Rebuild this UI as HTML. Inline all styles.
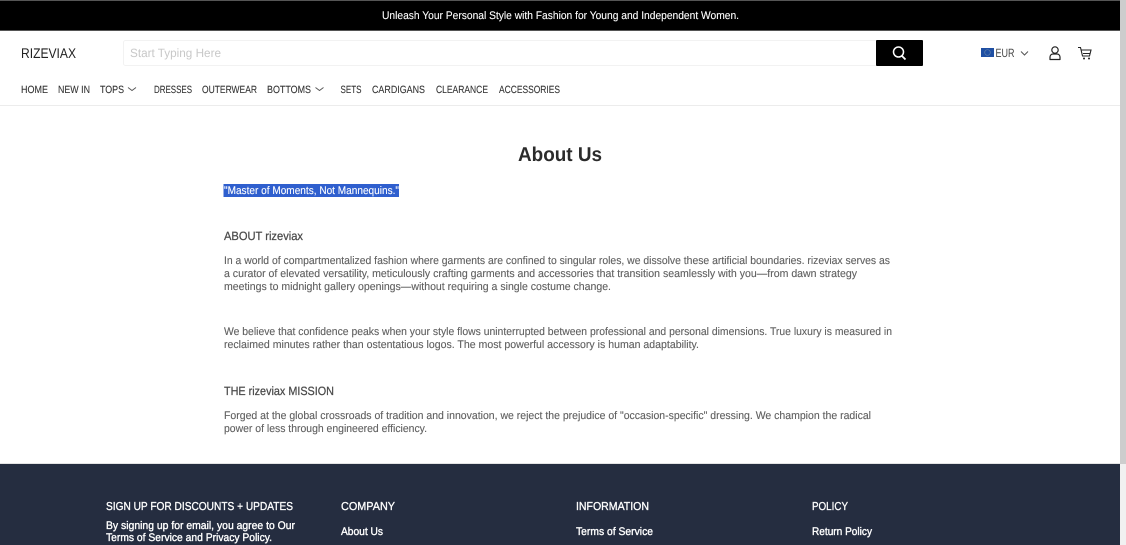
<!DOCTYPE html>
<html><head><meta charset="utf-8"><title>About Us</title>
<style>
html,body{margin:0;padding:0;width:1126px;height:545px;overflow:hidden;background:#fff}
svg{display:block;position:absolute;left:0;top:0}
text{font-family:"Liberation Sans",sans-serif;white-space:pre;text-rendering:geometricPrecision}
.nav{font-size:10.5px;fill:#333;stroke:#333;stroke-width:.1px}
.p{font-size:11px;fill:#606060;stroke:#606060;stroke-width:.12px}
.h{font-size:12px;fill:#4a4a4a;stroke:#4a4a4a;stroke-width:.25px}
.f{font-size:11px;fill:#fff;stroke:#fff;stroke-width:.35px}
.fh{font-size:11.5px;fill:#fff;stroke:#fff;stroke-width:.3px}
</style></head><body>
<svg width="1126" height="545" viewBox="0 0 1126 545" xmlns="http://www.w3.org/2000/svg">
<rect width="1126" height="545" fill="#fff"/>
<rect x="1120" width="6" height="545" fill="#f1f1f1"/>
<rect x="1120" width="6" height="464" fill="#cdcdcd"/>
<rect width="1120" height="30" fill="#000"/>
<rect width="1120" height="1" fill="#555"/>
<rect y="30" width="1120" height="1" fill="#555"/>
<text x="382" y="19" font-size="11" fill="#fff" stroke="#fff" stroke-width=".1" textLength="357" lengthAdjust="spacingAndGlyphs">Unleash Your Personal Style with Fashion for Young and Independent Women.</text>
<text x="21" y="58" font-size="14" fill="#222" textLength="55" lengthAdjust="spacingAndGlyphs">RIZEVIAX</text>
<rect x="123.500" y="40.500" width="760" height="25" rx="2" fill="#fff" stroke="#f2f2f2"/>
<text x="130" y="57" font-size="12" fill="#c8c8c8" textLength="91" lengthAdjust="spacingAndGlyphs">Start Typing Here</text>
<rect x="876" y="40" width="47" height="26" rx="1" fill="#000"/>
<circle cx="898.500" cy="52" r="5" fill="none" stroke="#fff" stroke-width="1.500"/>
<path d="M902 56l3.500 3.500" stroke="#fff" stroke-width="1.800" fill="none"/>
<rect x="981" y="48" width="13" height="9" fill="#1f4fa3"/>
<circle cx="987.500" cy="52.500" r="2.800" fill="none" stroke="#5f7fa8" stroke-width=".7"/>
<text x="995.500" y="57" font-size="12" fill="#444" textLength="19" lengthAdjust="spacingAndGlyphs">EUR</text>
<path d="M1021 51.500l3.500 3.500 3.500-3.500" fill="none" stroke="#555" stroke-width="1"/>
<circle cx="1055" cy="50" r="3.200" fill="none" stroke="#222" stroke-width="1.200"/>
<path d="M1050 59.500v-2.500a3 3 0 0 1 3-3h4a3 3 0 0 1 3 3v2.500z" fill="none" stroke="#222" stroke-width="1.200" stroke-linejoin="round"/>
<path d="M1078 47.500h2.500l2 8.500h7l1.500-6h-10" fill="none" stroke="#222" stroke-width="1.100"/>
<path d="M1083 53.500h7" stroke="#222" stroke-width="1"/>
<circle cx="1084" cy="58.500" r="1" fill="#222"/><circle cx="1089" cy="58.500" r="1" fill="#222"/>
<text class="nav" x="21" y="93" textLength="27" lengthAdjust="spacingAndGlyphs">HOME</text>
<text class="nav" x="58" y="93" textLength="32" lengthAdjust="spacingAndGlyphs">NEW IN</text>
<text class="nav" x="100" y="93" textLength="24" lengthAdjust="spacingAndGlyphs">TOPS</text>
<path d="M128 87.500l4 3 4-3" fill="none" stroke="#555" stroke-width=".9"/>
<text class="nav" x="154" y="93" textLength="38" lengthAdjust="spacingAndGlyphs">DRESSES</text>
<text class="nav" x="202" y="93" textLength="55" lengthAdjust="spacingAndGlyphs">OUTERWEAR</text>
<text class="nav" x="267" y="93" textLength="44" lengthAdjust="spacingAndGlyphs">BOTTOMS</text>
<path d="M315.500 87.500l4 3 4-3" fill="none" stroke="#555" stroke-width=".9"/>
<text class="nav" x="340.500" y="93" textLength="21" lengthAdjust="spacingAndGlyphs">SETS</text>
<text class="nav" x="372" y="93" textLength="53" lengthAdjust="spacingAndGlyphs">CARDIGANS</text>
<text class="nav" x="436" y="93" textLength="52" lengthAdjust="spacingAndGlyphs">CLEARANCE</text>
<text class="nav" x="499" y="93" textLength="61" lengthAdjust="spacingAndGlyphs">ACCESSORIES</text>
<rect y="105" width="1120" height="1" fill="#ececec"/>
<text x="518" y="161" font-size="20" font-weight="bold" fill="#2b2b2b" textLength="84" lengthAdjust="spacingAndGlyphs">About Us</text>
<rect x="223.500" y="184" width="175.500" height="13" fill="#2f5fce"/>
<text x="224" y="194" font-size="11" fill="#fff" stroke="#fff" stroke-width=".1" textLength="175" lengthAdjust="spacingAndGlyphs">"Master of Moments, Not Mannequins."</text>
<text class="h" x="224" y="240" textLength="79" lengthAdjust="spacingAndGlyphs">ABOUT rizeviax</text>
<text class="p" x="224" y="264" textLength="666" lengthAdjust="spacingAndGlyphs">In a world of compartmentalized fashion where garments are confined to singular roles, we dissolve these artificial boundaries. rizeviax serves as</text>
<text class="p" x="224" y="277" textLength="633" lengthAdjust="spacingAndGlyphs">a curator of elevated versatility, meticulously crafting garments and accessories that transition seamlessly with you—from dawn strategy</text>
<text class="p" x="224" y="290" textLength="387" lengthAdjust="spacingAndGlyphs">meetings to midnight gallery openings—without requiring a single costume change.</text>
<text class="p" x="224" y="335" textLength="668" lengthAdjust="spacingAndGlyphs">We believe that confidence peaks when your style flows uninterrupted between professional and personal dimensions. True luxury is measured in</text>
<text class="p" x="224" y="348" textLength="475" lengthAdjust="spacingAndGlyphs">reclaimed minutes rather than ostentatious logos. The most powerful accessory is human adaptability.</text>
<text class="h" x="224" y="395" textLength="110" lengthAdjust="spacingAndGlyphs">THE rizeviax MISSION</text>
<text class="p" x="224" y="419" textLength="647" lengthAdjust="spacingAndGlyphs">Forged at the global crossroads of tradition and innovation, we reject the prejudice of "occasion-specific" dressing. We champion the radical</text>
<text class="p" x="224" y="432" textLength="203" lengthAdjust="spacingAndGlyphs">power of less through engineered efficiency.</text>
<rect y="464" width="1120" height="81" fill="#252d40"/>
<rect y="463" width="1120" height="1" fill="#e4e4e4"/>
<text class="fh" x="106" y="510" textLength="187" lengthAdjust="spacingAndGlyphs">SIGN UP FOR DISCOUNTS + UPDATES</text>
<text class="f" x="106" y="529" textLength="189" lengthAdjust="spacingAndGlyphs">By signing up for email, you agree to Our</text>
<text class="f" x="106" y="541" textLength="166" lengthAdjust="spacingAndGlyphs">Terms of Service and Privacy Policy.</text>
<text class="fh" x="341" y="510" textLength="54" lengthAdjust="spacingAndGlyphs">COMPANY</text>
<text class="f" x="341" y="535" textLength="42" lengthAdjust="spacingAndGlyphs">About Us</text>
<text class="fh" x="576" y="510" textLength="73" lengthAdjust="spacingAndGlyphs">INFORMATION</text>
<text class="f" x="576" y="535" textLength="77" lengthAdjust="spacingAndGlyphs">Terms of Service</text>
<text class="fh" x="812" y="510" textLength="36" lengthAdjust="spacingAndGlyphs">POLICY</text>
<text class="f" x="812" y="535" textLength="60" lengthAdjust="spacingAndGlyphs">Return Policy</text>
</svg>
</body></html>
